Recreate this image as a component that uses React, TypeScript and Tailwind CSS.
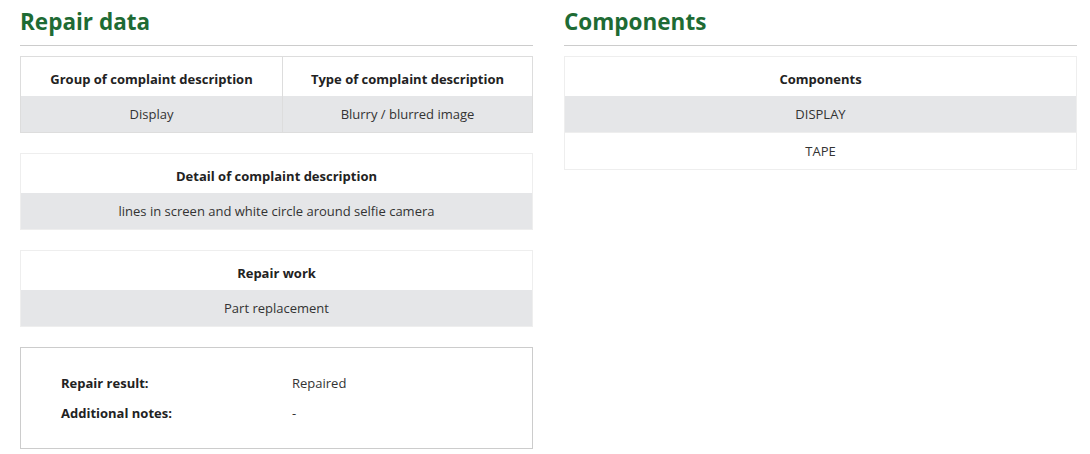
const font = { fontFamily: '"Open Sans", "Noto Sans", sans-serif' };

const Heading = ({ children }: { children: string }) => (
  <div className="border-b border-[#cccccc] pb-[7px] mb-[10px]">
    <h2 className="text-[22.5px] leading-[33px] font-bold text-[#1e6b34]">{children}</h2>
  </div>
);

const HeadCell = ({ children, className = "" }: { children: string; className?: string }) => (
  <div
    className={`h-[39px] flex items-end justify-center pb-[8px] text-[13px] leading-[18px] font-bold text-[#222] ${className}`}
  >
    {children}
  </div>
);

const BodyCell = ({ children, className = "", gray = true }: { children: string; className?: string; gray?: boolean }) => (
  <div
    className={`h-[36px] flex items-center justify-center pt-[2px] text-[13px] text-[#333] ${
      gray ? "bg-[#e5e6e8]" : "bg-white"
    } ${className}`}
  >
    {children}
  </div>
);

const SingleTable = ({ title, value }: { title: string; value: string }) => (
  <div className="border border-[#eeeeee]">
    <HeadCell>{title}</HeadCell>
    <BodyCell>{value}</BodyCell>
  </div>
);

export default function App() {
  return (
    <div className="bg-white min-h-[454px] pl-[20px] pt-[5px] flex gap-[31px] text-[#333]" style={font}>
      <div className="w-[513px]">
        <Heading>Repair data</Heading>
        <div className="border border-[#dddddd]">
          <div className="flex">
            <HeadCell className="w-[262px] border-r border-[#dddddd]">Group of complaint description</HeadCell>
            <HeadCell className="flex-1">Type of complaint description</HeadCell>
          </div>
          <div className="flex">
            <BodyCell className="w-[262px] border-r border-[#dddddd]">Display</BodyCell>
            <BodyCell className="flex-1">Blurry / blurred image</BodyCell>
          </div>
        </div>
        <div className="mt-[20px]">
          <SingleTable title="Detail of complaint description" value="lines in screen and white circle around selfie camera" />
        </div>
        <div className="mt-[20px]">
          <SingleTable title="Repair work" value="Part replacement" />
        </div>
        <div className="mt-[20px] border border-[#cccccc] h-[102px] px-[40px] pt-[25px] flex flex-col gap-[10px]">
          <div className="flex text-[13px] leading-[20px]">
            <span className="w-[231px] font-bold text-[#222]">Repair result:</span>
            <span>Repaired</span>
          </div>
          <div className="flex text-[13px] leading-[20px]">
            <span className="w-[231px] font-bold text-[#222]">Additional notes:</span>
            <span>-</span>
          </div>
        </div>
      </div>
      <div className="w-[513px]">
        <Heading>Components</Heading>
        <div className="border border-[#eeeeee]">
          <HeadCell>Components</HeadCell>
          <BodyCell>DISPLAY</BodyCell>
          <BodyCell gray={false} className="border-t border-[#eeeeee] h-[37px]">TAPE</BodyCell>
        </div>
      </div>
    </div>
  );
}
